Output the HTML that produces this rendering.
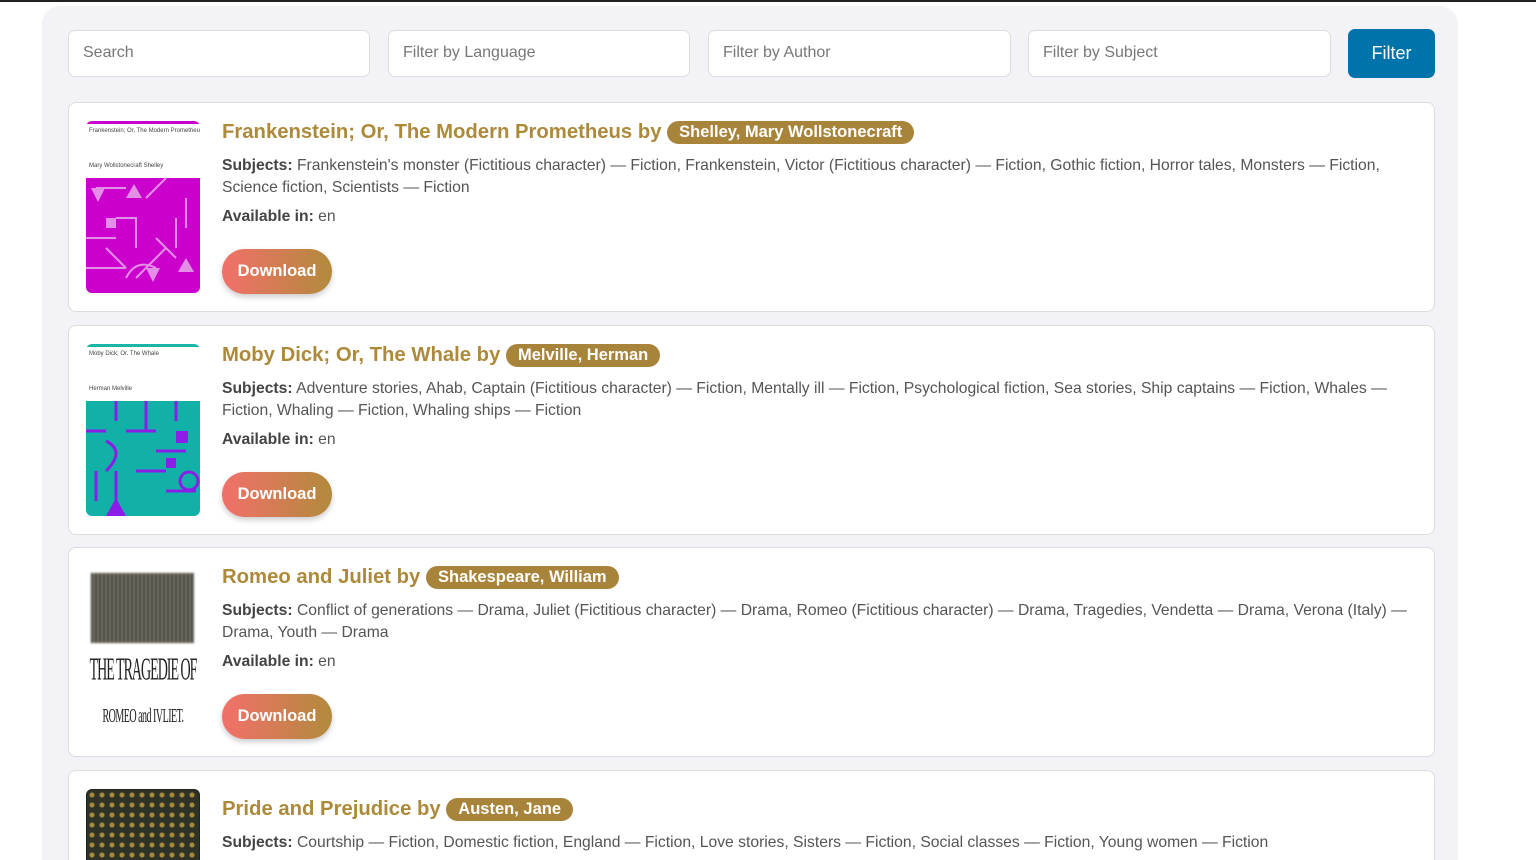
<!DOCTYPE html>
<html><head><meta charset="utf-8"><style>
*{box-sizing:border-box;margin:0;padding:0}
html,body{width:1536px;height:860px;overflow:hidden}
body{background:#fff;font-family:"Liberation Sans",Arial,sans-serif;position:relative}
.topl{position:absolute;left:0;top:0;width:1536px;height:2px;background:#222}
.wrap{position:absolute;left:42px;top:6px;width:1416px;height:854px;background:#f3f3f7;border-radius:18px 18px 0 0}
.inp{position:absolute;top:30px;height:47px;background:#fff;border:1px solid #ddd;border-radius:7px;font-size:16px;color:#777;padding:13px 14px}
.btn{position:absolute;left:1348px;top:29px;width:87px;height:49px;background:#0073aa;border-radius:7px;color:#fff;font-size:18px;text-align:center;line-height:49px}
.card{position:absolute;left:68px;width:1367px;height:210px;background:#fff;border:1px solid #ddd;border-radius:8px;overflow:hidden}
.cov{position:absolute;left:17px;top:18px;width:114px;height:172px;border-radius:6px;overflow:hidden}
.txt{position:absolute;left:153px;top:17px;right:20px;color:#555;font-size:15.7px;line-height:22.3px}
h2{font-size:20.3px;color:#ad8a3a;font-weight:bold;line-height:24px;margin-bottom:11px;white-space:nowrap}
.bd{display:inline-block;background:#a8843a;color:#fff;font-size:16.5px;border-radius:12px;padding:1px 12px;line-height:21px;vertical-align:1px}
b{color:#444}
.av{margin-top:6px}
.dl{position:absolute;left:153px;top:146px;width:110px;height:45px;border-radius:23px;background:linear-gradient(90deg,#f2706a,#b28a3c);color:#fff;font-weight:bold;font-size:16.5px;text-align:center;line-height:45px;box-shadow:0 3px 6px rgba(0,0,0,.2)}
.ct{font-size:6px;color:#444;position:absolute;left:3px;white-space:nowrap}
</style></head><body>
<div class="topl"></div>
<div class="wrap"></div>
<div class="inp" style="left:68px;width:302px">Search</div>
<div class="inp" style="left:388px;width:302px">Filter by Language</div>
<div class="inp" style="left:708px;width:303px">Filter by Author</div>
<div class="inp" style="left:1028px;width:303px">Filter by Subject</div>
<div class="btn">Filter</div>

<div class="card" style="top:102px">
<div class="cov"><div style="height:3px;background:#c0c;border-radius:3px"></div><div class="ct" style="top:7px">Frankenstein; Or, The Modern Prometheus</div><div class="ct" style="top:42px">Mary Wollstonecraft Shelley</div>
<svg style="position:absolute;left:0;top:57px" width="114" height="115"><rect width="114" height="115" fill="#cc00cc"/><g stroke="#e38fe8" stroke-width="2" fill="none"><path d="M10 10h30M60 20l20-20M30 40h20v30M70 60l20 20M0 90h40M50 100l30-30M90 40v30M20 70l20 20M0 60h30M100 20v30M40 100q10-20 30-10"/></g><path d="M40 20l8-14 8 14zM5 10h14l-7 14zM60 90h14l-7 14zM100 80l8 14h-16zM20 40h10v10H20z" fill="#e38fe8"/></svg></div>
<div class="txt"><h2>Frankenstein; Or, The Modern Prometheus by <span class="bd">Shelley, Mary Wollstonecraft</span></h2>
<div><b>Subjects:</b> Frankenstein's monster (Fictitious character) — Fiction, Frankenstein, Victor (Fictitious character) — Fiction, Gothic fiction, Horror tales, Monsters — Fiction, Science fiction, Scientists — Fiction</div>
<div class="av"><b>Available in:</b> en</div></div>
<div class="dl">Download</div></div>

<div class="card" style="top:325px">
<div class="cov"><div style="height:3px;background:#1bb5a8;border-radius:3px"></div><div class="ct" style="top:7px">Moby Dick; Or, The Whale</div><div class="ct" style="top:42px">Herman Melville</div>
<svg style="position:absolute;left:0;top:57px" width="114" height="115"><rect width="114" height="115" fill="#11b1a8"/><g stroke="#8a1ee8" stroke-width="3" fill="none"><path d="M0 30h20M30 0v20M60 0v30M40 30h30M90 0v20M10 70v30M30 70v30M50 70h30M80 90h30M20 40q20 10 0 30M70 50h30"/><circle cx="103" cy="80" r="9"/></g><path d="M20 115l10-18 10 18zM90 30h12v12H90zM80 57h10v10H80z" fill="#8a1ee8"/></svg></div>
<div class="txt"><h2>Moby Dick; Or, The Whale by <span class="bd">Melville, Herman</span></h2>
<div><b>Subjects:</b> Adventure stories, Ahab, Captain (Fictitious character) — Fiction, Mentally ill — Fiction, Psychological fiction, Sea stories, Ship captains — Fiction, Whales — Fiction, Whaling — Fiction, Whaling ships — Fiction</div>
<div class="av"><b>Available in:</b> en</div></div>
<div class="dl">Download</div></div>

<div class="card" style="top:547px">
<div class="cov" style="background:#fff"><div style="position:absolute;left:5px;top:7px;width:103px;height:70px;background:repeating-linear-gradient(90deg,#333 0 2px,#8a8570 2px 4px);filter:blur(1px)"></div>
<div style="position:absolute;left:0;top:88px;width:114px;text-align:center;font-family:'Liberation Serif',serif;font-size:14px;color:#222;transform:scaleY(2.3);transform-origin:top;white-space:nowrap;letter-spacing:-1px">THE TRAGEDIE OF</div>
<div style="position:absolute;left:0;top:140px;width:114px;text-align:center;font-family:'Liberation Serif',serif;font-size:10px;color:#222;transform:scaleY(2);transform-origin:top;white-space:nowrap;letter-spacing:-0.5px">ROMEO and IVLIET.</div></div>
<div class="txt"><h2>Romeo and Juliet by <span class="bd">Shakespeare, William</span></h2>
<div><b>Subjects:</b> Conflict of generations — Drama, Juliet (Fictitious character) — Drama, Romeo (Fictitious character) — Drama, Tragedies, Vendetta — Drama, Verona (Italy) — Drama, Youth — Drama</div>
<div class="av"><b>Available in:</b> en</div></div>
<div class="dl">Download</div></div>

<div class="card" style="top:770px;height:90px;border-bottom:none;border-radius:8px 8px 0 0">
<div class="cov" style="background:radial-gradient(circle,#a88a3a 2px,#2e3328 3px) 0 0/10px 10px;border:1px solid #222"></div>
<div class="txt" style="top:26px"><h2>Pride and Prejudice by <span class="bd">Austen, Jane</span></h2>
<div><b>Subjects:</b> Courtship — Fiction, Domestic fiction, England — Fiction, Love stories, Sisters — Fiction, Social classes — Fiction, Young women — Fiction</div></div></div>
</body></html>
